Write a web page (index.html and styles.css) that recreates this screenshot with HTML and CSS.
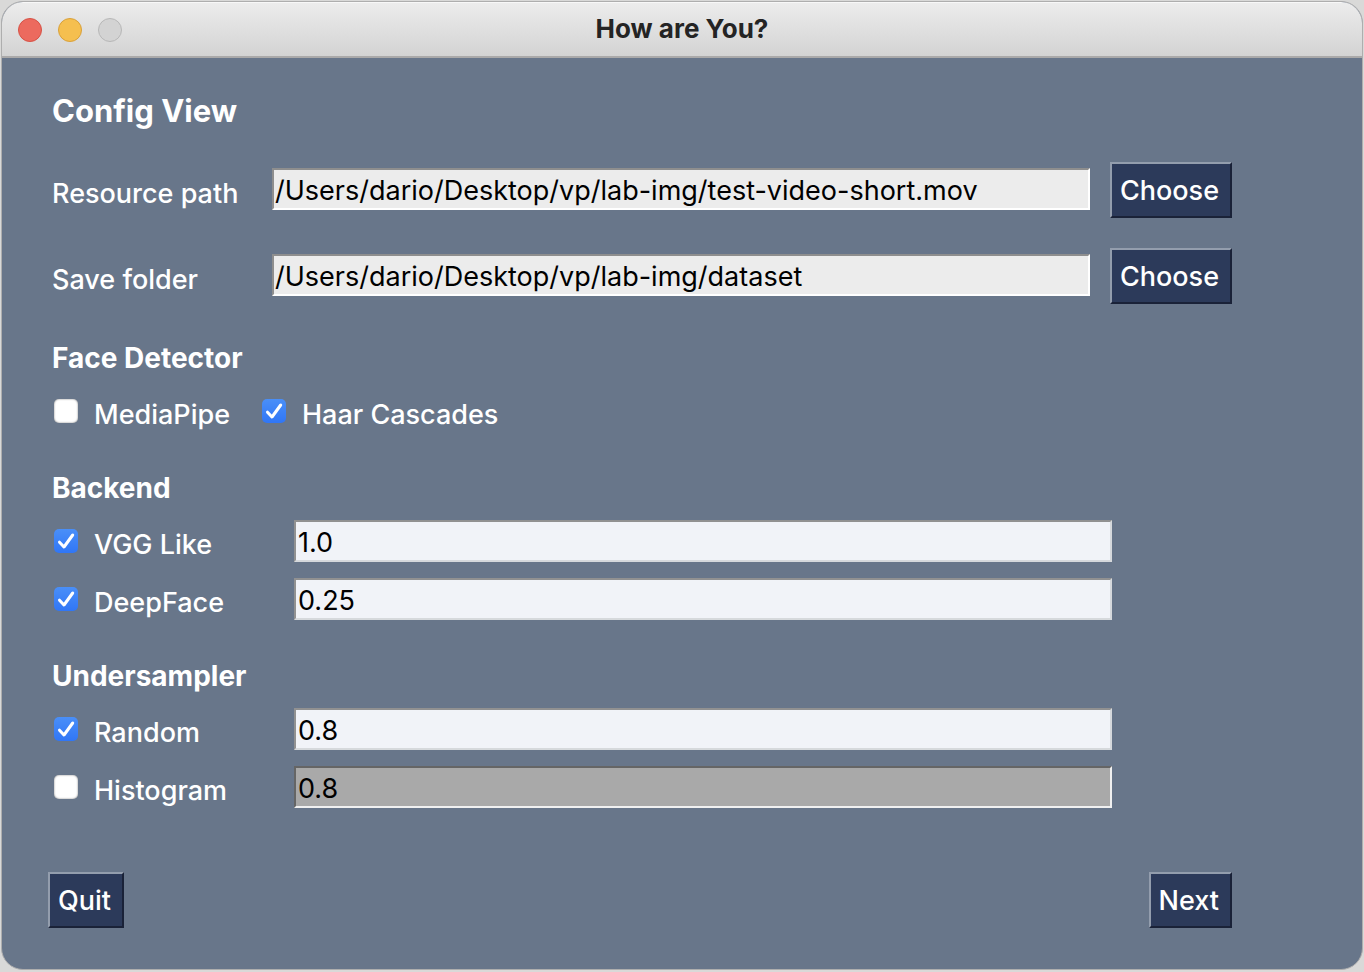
FILE: index.html
```html
<!DOCTYPE html>
<html lang="en">
<head>
<meta charset="utf-8">
<title>How are You?</title>
<link rel="stylesheet" href="styles.css">
</head>
<body>
<div class="window">
  <header class="titlebar">
    <div class="lights">
      <button type="button" class="light light-close" aria-label="Close"></button>
      <button type="button" class="light light-minimize" aria-label="Minimize"></button>
      <button type="button" class="light light-zoom" aria-label="Zoom" disabled></button>
    </div>
    <div class="title">How are You?</div>
  </header>
  <form class="config">
    <h1 class="heading">Config View</h1>
    <div class="paths">
      <div class="path-row">
        <label class="label" for="resource">Resource path</label>
        <input class="field field-path" id="resource" type="text" value="/Users/dario/Desktop/vp/lab-img/test-video-short.mov" readonly>
        <button type="button" class="button">Choose</button>
      </div>
      <div class="path-row">
        <label class="label" for="folder">Save folder</label>
        <input class="field field-path" id="folder" type="text" value="/Users/dario/Desktop/vp/lab-img/dataset" readonly>
        <button type="button" class="button">Choose</button>
      </div>
    </div>

    <section class="group">
      <h2 class="subheading">Face Detector</h2>
      <div class="detectors">
        <div class="option"><input class="check" type="checkbox" id="mediapipe"><label class="label" for="mediapipe">MediaPipe</label></div>
        <div class="option"><input class="check" type="checkbox" id="haar" checked><label class="label" for="haar">Haar Cascades</label></div>
      </div>
    </section>

    <section class="group">
      <h2 class="subheading">Backend</h2>
      <div class="settings">
        <div class="option"><input class="check" type="checkbox" id="vgg" checked><label class="label" for="vgg">VGG Like</label></div>
        <input class="field" type="text" aria-label="VGG Like weight" value="1.0">
        <div class="option"><input class="check" type="checkbox" id="deepface" checked><label class="label" for="deepface">DeepFace</label></div>
        <input class="field" type="text" aria-label="DeepFace weight" value="0.25">
      </div>
    </section>

    <section class="group">
      <h2 class="subheading">Undersampler</h2>
      <div class="settings">
        <div class="option"><input class="check" type="checkbox" id="random" checked><label class="label" for="random">Random</label></div>
        <input class="field" type="text" aria-label="Random ratio" value="0.8">
        <div class="option"><input class="check" type="checkbox" id="histogram"><label class="label" for="histogram">Histogram</label></div>
        <input class="field field-off" type="text" aria-label="Histogram ratio" value="0.8" disabled>
      </div>
    </section>

    <div class="actions">
      <button type="button" class="button">Quit</button>
      <button type="button" class="button">Next</button>
    </div>
  </form>
</div>
</body>
</html>
```

FILE: styles.css
```css
* {
  box-sizing: border-box;
}

body {
  margin: 0;
  padding: 1px 1px 2px;
  min-height: 100vh;
  display: flex;
  background: #d9d9d8;
  font-family: Inter, "Liberation Sans", sans-serif;
  font-size: 27px;
  font-weight: 450;
  line-height: 32px;
}

.window {
  flex: 1;
  display: flex;
  flex-direction: column;
  border: 1px solid #aeaeae;
  border-radius: 22px;
  overflow: hidden;
  background: #68768a;
}

.titlebar {
  display: grid;
  grid-template-columns: 1fr auto 1fr;
  align-items: center;
  height: 56px;
  padding: 0 16px;
  background: linear-gradient(#ececec, #d3d3d3);
  border-top: 1px solid #f8f8f8;
  border-bottom: 2px solid #aaa9a9;
}

.title {
  padding-bottom: 2px;
  color: #242424;
  font-size: 26px;
  font-weight: 700;
}

.lights {
  display: flex;
  gap: 16px;
}

.light {
  width: 24px;
  height: 24px;
  padding: 0;
  border: 1px solid;
  border-radius: 50%;
}

.light-close {
  background: #ec6a5e;
  border-color: #d65246;
}

.light-minimize {
  background: #f5bf4f;
  border-color: #d8a03b;
}

.light-zoom {
  background: #d3d3d3;
  border-color: #b7b7b7;
}

.config {
  display: flex;
  flex-direction: column;
  padding: 32px 130px 40px 46px;
  color: #fff;
}

.heading,
.subheading {
  margin: 0;
  padding-left: 4px;
}

.heading {
  font-size: 31px;
  font-weight: 700;
  line-height: 42px;
}

.subheading {
  font-size: 28px;
  font-weight: 750;
}

.paths {
  display: grid;
  gap: 30px;
  margin: 30px 0 38px;
  padding-left: 4px;
}

.path-row {
  display: grid;
  grid-template-columns: 220px 1fr auto;
  align-items: center;
}

.label {
  padding-top: 7px;
}

.field {
  width: 100%;
  min-width: 0;
  height: 42px;
  padding: 2px 2px 0;
  border: 2px solid;
  border-color: #919191 #d6d9dc #d6d9dc #919191;
  border-radius: 0;
  background: #f1f3f8;
  color: #000;
  font: inherit;
  font-weight: 400;
}

.field-path {
  margin-bottom: 2px;
  padding-left: 1px;
  background: #ececec;
  border-color: #8e8e8e #fff #fff #8e8e8e;
}

.field-off {
  background: #a9a9a9;
  border-color: #656565 #f0f0f0 #f0f0f0 #656565;
}

.button {
  height: 56px;
  padding: 2px 11px 0 8px;
  border: 2px solid;
  border-color: #939dad #1a2238 #1a2238 #939dad;
  background: #2c3a5a;
  color: #fff;
  font: inherit;
}

.path-row .button {
  margin-left: 20px;
}

.group {
  margin-bottom: 40px;
}

.detectors {
  display: flex;
  gap: 32px;
  margin-top: 16px;
  padding-left: 6px;
}

.option {
  display: flex;
  align-items: center;
  gap: 16px;
  height: 42px;
}

.settings {
  display: grid;
  grid-template-columns: 240px 1fr;
  gap: 16px 0;
  margin-top: 16px;
  padding: 0 120px 0 6px;
}

.check {
  appearance: none;
  flex: none;
  width: 24px;
  height: 24px;
  margin: 0;
  border-radius: 5px;
  background: #fff;
  box-shadow: inset 0 0 2px #777;
}

.check:checked {
  background: url('data:image/svg+xml,<svg xmlns="http://www.w3.org/2000/svg" viewBox="0 0 24 24"><path d="M5.5 13.2 L10 18 L18.7 6" fill="none" stroke="white" stroke-width="3" stroke-linecap="round" stroke-linejoin="round"/></svg>'), linear-gradient(#4a8ff8, #3076f6);
  box-shadow: none;
}

.actions {
  display: flex;
  justify-content: space-between;
  margin-top: 24px;
}
```
